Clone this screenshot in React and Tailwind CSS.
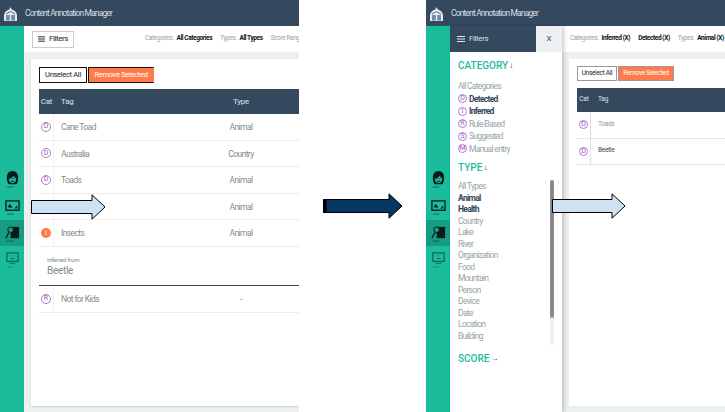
const font = { fontFamily: 'Roboto, "Liberation Sans", sans-serif' }

function Logo() {
  return (
    <svg viewBox="0 0 13 15" className="w-[13px] h-[15px] shrink-0">
      <path d="M0 10C0 6 3 3.5 6.5 3.5S13 6 13 10v5H0z" fill="#e4eaf0" />
      <path d="M5 4l1.5-3L8 4z" fill="#e4eaf0" />
      <rect x="2" y="9" width="3.8" height="5.5" fill="#6f8cab" />
      <rect x="7.2" y="9" width="3.8" height="5.5" fill="#6f8cab" />
      <path d="M2 8l4.5-2.5L11 8" stroke="#34495e" strokeWidth="0.8" fill="none" />
    </svg>
  )
}

function NavIcon({ kind }) {
  const color = kind === 'screen' ? '#0d6b58' : '#0a1a17'
  return (
    <svg viewBox="0 0 16 20" className="w-[15px] h-[19px]">
      {kind === 'face' && (
        <>
          <path d="M8 1c4 0 6 3 6 7s-1 6-2 7H4c-1-1-2-3-2-7s2-7 6-7z" fill={color} />
          <path d="M4 9c2 0 4-1 5-3 1 1 2 2 3 3 0 3-2 5-4 5s-4-2-4-5z" fill="#1abc9c" />
          <path d="M6 9h1M9 9h1M6.5 12h3" stroke={color} />
        </>
      )}
      {kind === 'photo' && (
        <>
          <rect x="1" y="4" width="14" height="10" fill="#1abc9c" stroke={color} strokeWidth="1.4" />
          <path d="M3 11l2-4 3 4zM10 12l3-3v3z" fill={color} />
        </>
      )}
      {kind === 'doc' && (
        <>
          <rect x="6" y="3" width="9" height="12" fill={color} />
          <circle cx="6" cy="6" r="3" fill="#159c82" stroke={color} />
          <path d="M4 9l-3 6" stroke={color} strokeWidth="1.4" />
        </>
      )}
      {kind === 'screen' && (
        <>
          <rect x="2" y="3" width="12" height="9" fill="none" stroke={color} strokeWidth="1.4" />
          <path d="M6 6h1M9 6h1M6 9h4M5 14h6" stroke={color} />
        </>
      )}
      <path d="M2 18h7" stroke={color} strokeOpacity="0.5" />
    </svg>
  )
}

function Sidebar() {
  return (
    <div className="w-[24px] shrink-0 bg-[#1abc9c] flex flex-col items-center pt-[140px]">
      <div className="h-[27px] w-full flex items-center justify-center"><NavIcon kind="face" /></div>
      <div className="h-[27px] w-full flex items-center justify-center"><NavIcon kind="photo" /></div>
      <div className="h-[26px] w-full flex items-center justify-center bg-[#159c82]"><NavIcon kind="doc" /></div>
      <div className="h-[26px] w-full flex items-center justify-center"><NavIcon kind="screen" /></div>
    </div>
  )
}

function Header() {
  return (
    <div className="h-[26px] bg-[#34495e] flex items-center pl-[4px] gap-[8px] shrink-0">
      <Logo />
      <span className="text-[8.5px] tracking-[-0.85px] text-[#d5dde5] whitespace-nowrap">Content Annotation Manager</span>
    </div>
  )
}

function Badge({ letter, solid, size = 'w-[10px] h-[10px]' }) {
  return (
    <span
      className={`${size} rounded-full flex items-center justify-center text-[7px] font-normal tracking-normal leading-none shrink-0 ${
        solid ? 'bg-[#ff7b4a] text-white' : 'border border-[#b277d6] text-[#9b59b6]'
      }`}
    >
      {letter}
    </span>
  )
}

function Row({ letter, solid, tag, type }) {
  return (
    <div className="h-[26.6px] flex items-center border-b border-[#ececec] text-[8.5px] tracking-[-0.6px] text-[#7f8c8d]">
      <div className="w-[15px] h-full shrink-0 border-r border-[#f3f3f3] flex items-center justify-center">
        {letter && <Badge letter={letter} solid={solid} />}
      </div>
      <div className="pl-[7px] pt-[1px] w-[157px]">{tag}</div>
      <div className="w-[60px] pt-[1px] text-center">{type}</div>
    </div>
  )
}

function FilterLine({ items }) {
  return (
    <div className="flex gap-[8px] text-[6.5px] tracking-[-0.4px] whitespace-nowrap">
      {items.map((it) => (
        <span key={it.value || it.label} className="text-[#95a5a6]">
          {it.label && <span className="mr-[3px]">{it.label}</span>}
          <b className="text-[#111]">{it.value}</b>
        </span>
      ))}
    </div>
  )
}

function LeftScreen() {
  return (
    <div className="w-[299px] h-full overflow-hidden flex flex-col shrink-0" style={font}>
      <Header />
      <div className="flex flex-1 min-h-0">
        <Sidebar />
        <div className="flex-1 min-w-0 bg-[#ecf0f1] flex flex-col">
          <div className="h-[26px] bg-white flex items-center pl-[8px] shrink-0">
            <div className="w-[42px] h-[17px] border border-[#ccc] flex items-center justify-center gap-[4px] text-[8px] tracking-[-0.4px] text-[#222] shrink-0">
              <svg viewBox="0 0 8 6" className="w-[7px] h-[6px]"><path d="M0 .5h8M0 3h8M0 5.5h8" stroke="#111" /></svg>
              Filters
            </div>
            <div className="ml-[71px]">
              <FilterLine items={[
                { label: 'Categories:', value: 'All Categories' },
                { label: 'Types:', value: 'All Types' },
                { label: 'Score Range:', value: '' },
              ]} />
            </div>
          </div>
          <div className="ml-[7px] mt-[7px] h-[347px] bg-white pl-[8px] pt-[8px] shadow-sm">
            <div className="flex gap-[1px] h-[16px] text-[7.5px] tracking-[-0.3px]">
              <div className="w-[48px] border border-[#111] flex items-center justify-center text-[#222]">Unselect All</div>
              <div className="w-[66px] border border-[#111] border-r-[#ff7b4a] bg-[#ff7b4a] flex items-center justify-center text-white">Remove Selected</div>
            </div>
            <div className="mt-[6px] h-[25px] bg-[#34495e] flex items-center text-[8px] tracking-[-0.2px] text-[#dfe6ee]">
              <div className="w-[15px] text-center shrink-0">Cat</div>
              <div className="pl-[7px] w-[157px]">Tag</div>
              <div className="w-[60px] text-center">Type</div>
            </div>
            <Row letter="D" tag="Cane Toad" type="Animal" />
            <Row letter="D" tag="Australia" type="Country" />
            <Row letter="D" tag="Toads" type="Animal" />
            <Row tag="" type="Animal" />
            <Row letter="I" solid tag="Insects" type="Animal" />
            <div className="h-[39px] border-b-[1.5px] border-[#34495e] pl-[8px] pt-[9px] text-[#7f8c8d]">
              <div className="text-[6px] tracking-[-0.2px] leading-[8px]">Inferred from</div>
              <div className="text-[10px] tracking-[-0.3px] leading-[14px]">Beetle</div>
            </div>
            <Row letter="R" tag="Not for Kids" type="-" />
          </div>
        </div>
      </div>
    </div>
  )
}

function FilterHeading({ children, arrow }) {
  return (
    <div className="flex items-center gap-[1px] text-[10px] font-medium leading-[12px] text-[#1abc9c]">
      {children}
      <span className="text-[8px] font-bold text-[#333]">{arrow}</span>
    </div>
  )
}

function FilterPanel() {
  const cats = [
    ['D', 'Detected', true],
    ['I', 'Inferred', true],
    ['R', 'Rule-Based', false],
    ['S', 'Suggested', false],
    ['M', 'Manual entry', false],
  ]
  const types = ['All Types', 'Animal', 'Health', 'Country', 'Lake', 'River', 'Organization', 'Food', 'Mountain', 'Person', 'Device', 'Date', 'Location', 'Building']
  return (
    <div className="w-[112px] shrink-0 bg-white flex flex-col shadow-[2px_0_4px_rgba(0,0,0,0.2)] z-10">
      <div className="h-[26px] flex shrink-0">
        <div className="w-[86px] bg-[#34495e] flex items-center pl-[7px] gap-[4px] text-[8px] tracking-[-0.4px] text-[#d5dde5]">
          <svg viewBox="0 0 8 6" className="w-[8px] h-[6px]"><path d="M0 .5h8M0 3h8M0 5.5h8" stroke="#dfe6ee" /></svg>
          Filters
        </div>
        <div className="w-[26px] bg-[#ecf0f1] flex items-center justify-center text-[8px] text-[#34495e]">X</div>
      </div>
      <div className="flex-1 relative pl-[8px] pt-[8px]">
        <FilterHeading arrow="↓">CATEGORY</FilterHeading>
        <div className="mt-[8px] text-[8.5px] tracking-[-0.7px] leading-[12.5px] text-[#95a5a6]">
          <div>All Categories</div>
          {cats.map(([l, name, on]) => (
            <div key={l} className={`flex items-center gap-[2px] ${on ? 'font-bold text-[#34495e]' : ''}`}>
              <Badge letter={l} size="w-[9px] h-[9px]" /> {name}
            </div>
          ))}
        </div>
        <div className="mt-[7px]"><FilterHeading arrow="↓">TYPE</FilterHeading></div>
        <div className="mt-[7px] text-[8.5px] tracking-[-0.7px] leading-[11.5px] text-[#95a5a6]">
          {types.map((t) => (
            <div key={t} className={t === 'Animal' || t === 'Health' ? 'font-bold text-[#34495e]' : ''}>{t}</div>
          ))}
        </div>
        <div className="mt-[11px]"><FilterHeading arrow="→">SCORE</FilterHeading></div>
        <div className="absolute left-[100px] top-[128px] w-[4px] h-[165px] rounded-full bg-[#f0f0f0]">
          <div className="h-[138px] rounded-full bg-[#8a8a8a]" />
        </div>
      </div>
    </div>
  )
}

function SmallRow({ letter, tag, dark }) {
  return (
    <div className="h-[26.5px] flex items-center border-b border-[#e5e5e5] text-[6.5px] tracking-[-0.3px] text-[#8a9ba8]">
      <div className="w-[14px] h-full shrink-0 border-r border-[#ddd] flex items-center justify-center">
        <Badge letter={letter} size="w-[9px] h-[9px]" />
      </div>
      <div className={`pl-[7px] ${dark ? 'text-[#34495e]' : ''}`}>{tag}</div>
    </div>
  )
}

function RightScreen() {
  return (
    <div className="w-[299px] h-full overflow-hidden flex flex-col shrink-0" style={font}>
      <Header />
      <div className="flex flex-1 min-h-0">
        <Sidebar />
        <FilterPanel />
        <div className="flex-1 min-w-0 bg-[#ecf0f1] flex flex-col">
          <div className="h-[26px] bg-white flex items-center pl-[8px] shrink-0">
            <FilterLine items={[
              { label: 'Categories:', value: 'Inferred (X)' },
              { label: '', value: 'Detected (X)' },
              { label: 'Types:', value: 'Animal (X)' },
            ]} />
          </div>
          <div className="ml-[7px] mt-[7px] h-[347px] bg-white pl-[8px] pt-[7px]">
            <div className="flex gap-[1px] h-[15px] text-[6.5px] tracking-[-0.3px]">
              <div className="w-[40px] border border-[#999] flex items-center justify-center text-[#222] whitespace-nowrap">Unselect All</div>
              <div className="w-[56px] border border-[#999] bg-[#ff7b4a] flex items-center justify-center text-white whitespace-nowrap">Remove Selected</div>
            </div>
            <div className="mt-[7px] h-[24px] bg-[#34495e] flex items-center text-[6.5px] tracking-[-0.2px] text-[#dfe6ee]">
              <div className="w-[14px] text-center shrink-0">Cat</div>
              <div className="pl-[7px]">Tag</div>
            </div>
            <SmallRow letter="D" tag="Toads" />
            <SmallRow letter="D" tag="Beetle" dark />
          </div>
        </div>
      </div>
    </div>
  )
}

function Arrow({ fill, w, band, className }) {
  return (
    <svg viewBox={`0 0 ${w} 26`} width={w} height={26} className={className}>
      <path d={`M.5 6.5H${w - 14}V.8L${w - 1} 13 ${w - 14} 25.2V19.5H.5z`} fill={fill} stroke="#000" strokeWidth="1" />
      {band && <rect x="0" y="6" width="3.5" height="14" fill="#000" />}
    </svg>
  )
}

export default function App() {
  return (
    <div className="relative w-[725px] h-[412px] bg-white flex overflow-hidden">
      <LeftScreen />
      <div className="w-[127px] shrink-0" />
      <RightScreen />
      <Arrow fill="#cfe2f3" w={75} className="absolute z-20 left-[31px] top-[194px]" />
      <Arrow fill="#073763" w={80} band className="absolute z-20 left-[323px] top-[193px]" />
      <Arrow fill="#cfe2f3" w={74} className="absolute z-20 left-[552px] top-[193px]" />
    </div>
  )
}
